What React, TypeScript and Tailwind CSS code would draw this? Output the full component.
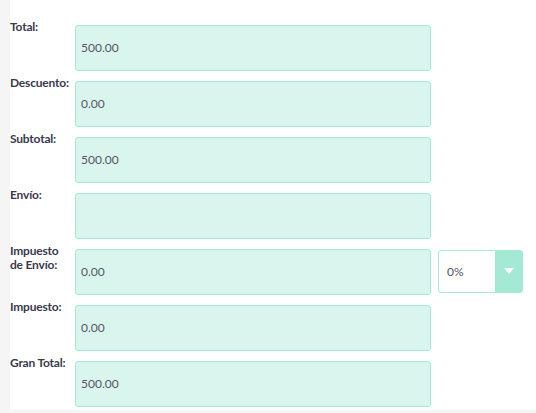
const rows = [
  { label: 'Total:', value: '500.00' },
  { label: 'Descuento:', value: '0.00' },
  { label: 'Subtotal:', value: '500.00' },
  { label: 'Envío:', value: '' },
  { label: 'Impuesto de Envío:', value: '0.00', select: true },
  { label: 'Impuesto:', value: '0.00' },
  { label: 'Gran Total:', value: '500.00' },
]

export default function App() {
  return (
    <div className="w-[536px] h-[413px] bg-[#f5f5f5] pl-[10px] pb-[3px] overflow-hidden" style={{ fontFamily: 'Lato, "Noto Sans", sans-serif' }}>
      <div className="bg-white h-[410px] pt-[25px] flex flex-col gap-[10px]">
        {rows.map((r) => (
          <div key={r.label} className="flex items-start">
            <div className="w-[65px] -mt-[5px] text-[12px] leading-[14px] font-bold text-[#3a3a4c] tracking-[-0.2px]">
              {r.label === 'Impuesto de Envío:' ? (
                <>Impuesto<br />de Envío:</>
              ) : r.label}
            </div>
            <div className="w-[356px] h-[46px] rounded-[3px] border border-[#a3e9d4] bg-[#daf5ed] flex items-center pl-[5px] text-[12px] text-[#555560]">
              {r.value}
            </div>
            {r.select && (
              <div className="ml-[7px] w-[85px] h-[43px] mt-[1px] rounded-[3px] border border-[#a3e9d4] bg-white flex">
                <div className="flex-1 flex items-center pl-[8px] text-[12px] text-[#555560]">0%</div>
                <div className="w-[27px] bg-[#a3e9d4] flex items-center justify-center">
                  <svg width="10" height="7" viewBox="0 0 10 7"><path d="M0 0h10L5 6z" fill="#fff" /></svg>
                </div>
              </div>
            )}
          </div>
        ))}
      </div>
    </div>
  )
}
